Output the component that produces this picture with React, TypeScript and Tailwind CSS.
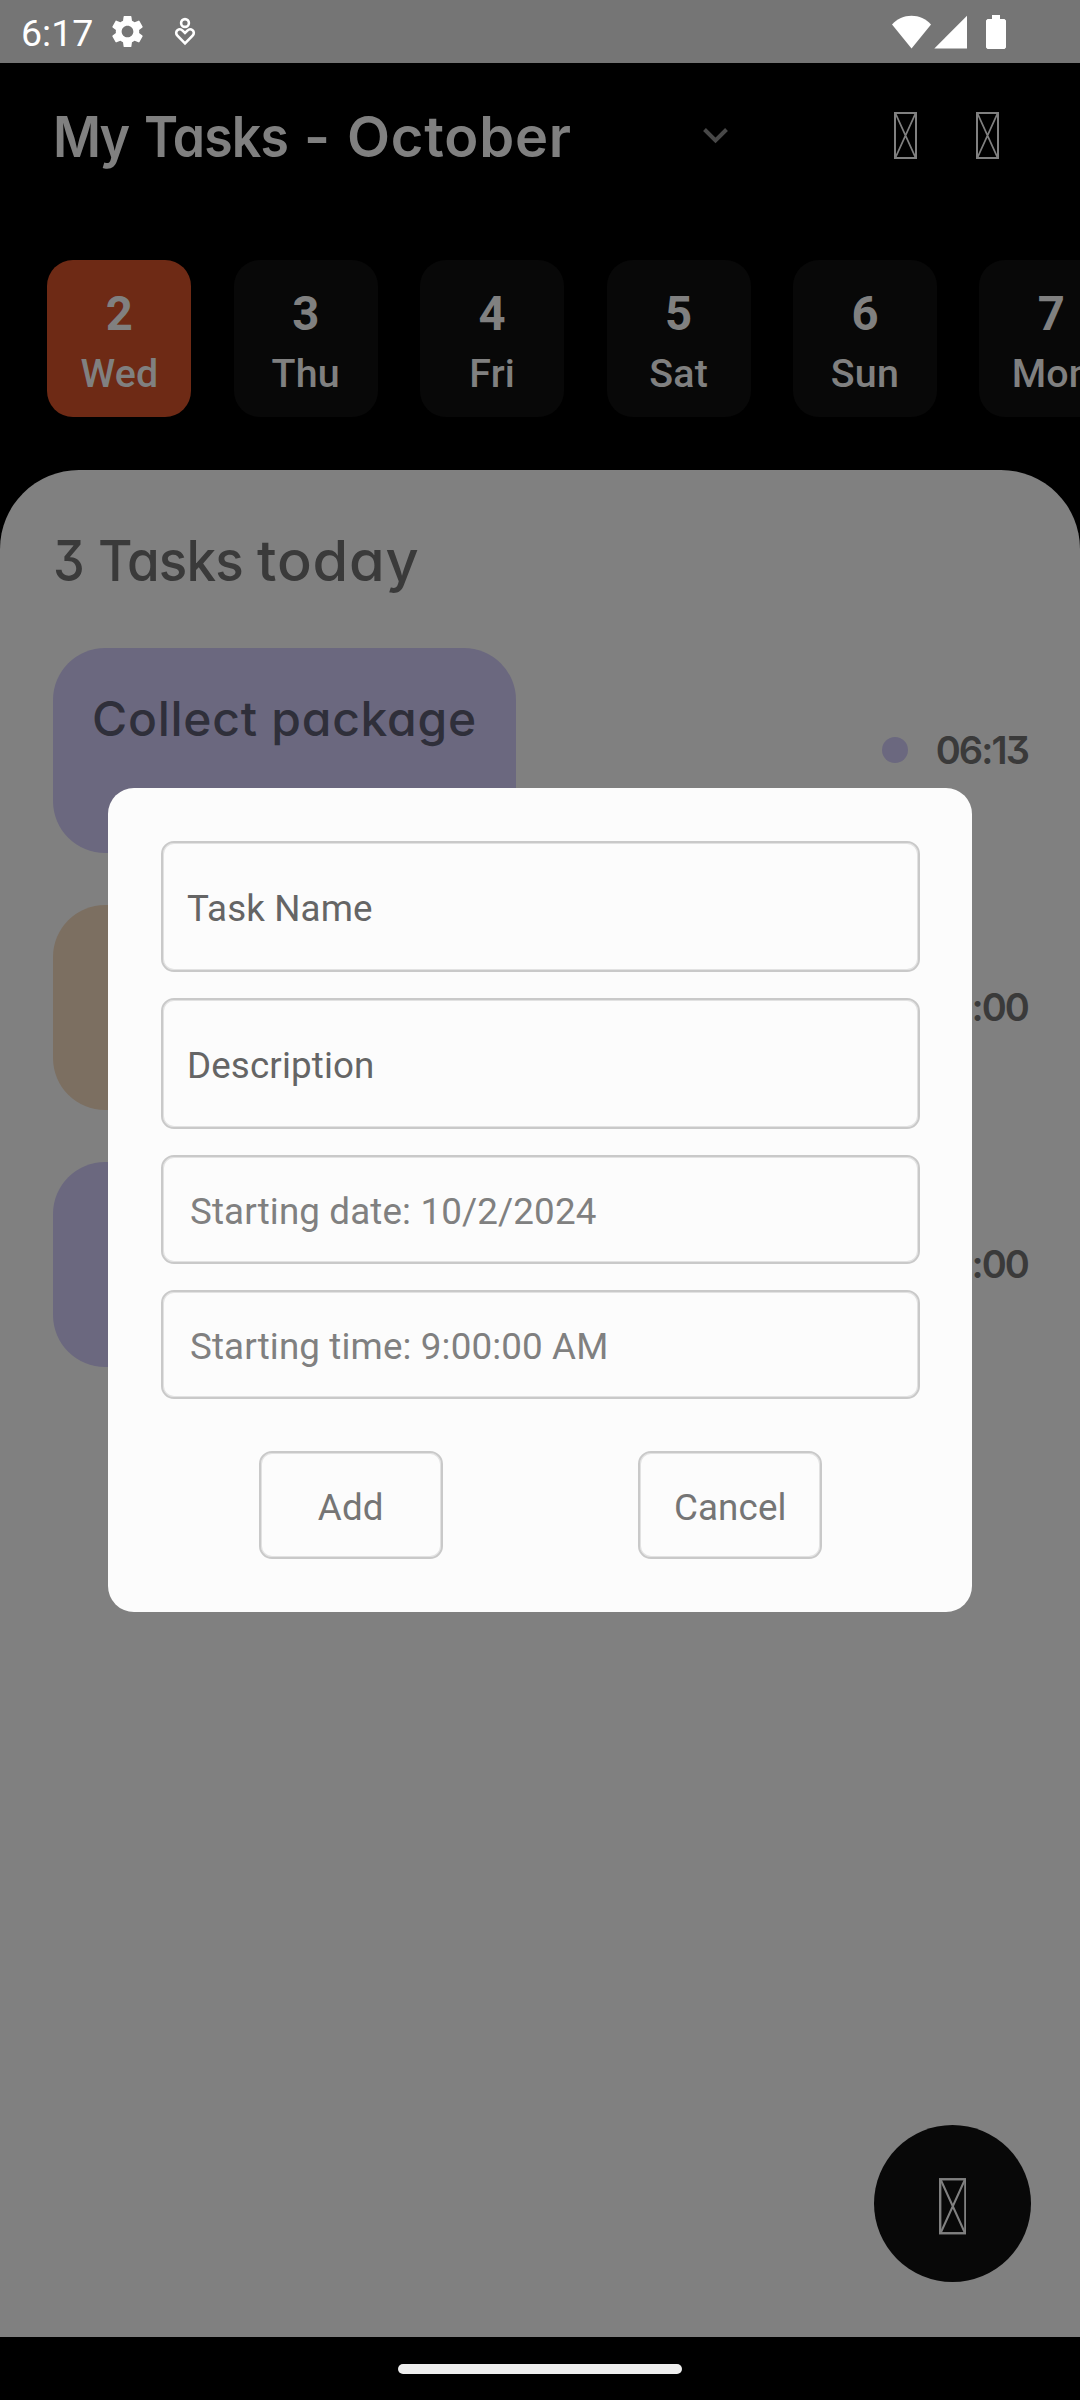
import React from "react";
import { MdSettings } from "react-icons/md";

const days = [
  { n: 2, d: "Wed", active: true },
  { n: 3, d: "Thu" },
  { n: 4, d: "Fri" },
  { n: 5, d: "Sat" },
  { n: 6, d: "Sun" },
  { n: 7, d: "Mon" },
];

const tasks = [
  { title: "Collect package", time: "06:13", tone: "bg-[#6b687f]" },
  { title: "", time: "09:00", tone: "bg-[#7c6f61]" },
  { title: "", time: "09:00", tone: "bg-[#6b687f]" },
];

function MissingGlyph({ className }: { className: string }) {
  return (
    <svg className={className} viewBox="0 0 23 47" fill="none" stroke="#808080">
      <rect x="1" y="1" width="21" height="45" strokeWidth="2" />
      <path d="M1.5 1.5L21.5 45.5M21.5 1.5L1.5 45.5" strokeWidth="1.8" />
    </svg>
  );
}

function StatusBar() {
  return (
    <div className="flex h-[63px] shrink-0 items-center bg-[#757575] pl-[21px] pr-[74px] text-white">
      <span className="w-[87px] pt-[2px] text-[37.5px] leading-[44px]">6:17</span>
      <MdSettings className="size-[39px]" />
      <svg className="ml-[27px] h-[29px] w-[22px]" viewBox="0 0 22 29" fill="none" stroke="white" strokeWidth="2.6">
        <circle cx="11" cy="6" r="3.9" />
        <path d="M11 26.3L3.4 18.6C1.7 16.8 1.9 14.4 3.4 13.2C5.2 11.8 7.3 12.3 8.6 13.6L11 16L13.4 13.6C14.7 12.3 16.8 11.8 18.6 13.2C20.1 14.4 20.3 16.8 18.6 18.6Z" />
      </svg>
      <div className="ml-auto flex items-center">
        <svg className="h-[34px] w-[39px]" viewBox="0 0 39 34" fill="white">
          <path d="M19.5 33.5L0 9.5C5 3.8 12 0.8 19.5 0.8S34 3.8 39 9.5Z" />
        </svg>
        <svg className="ml-[3px] h-[34px] w-[33px]" viewBox="0 0 33 34" fill="white">
          <path d="M33 0.8V33.5H0.3Z" />
        </svg>
        <svg className="ml-[19px] h-[34px] w-[20px]" viewBox="0 0 20 34" fill="white">
          <path d="M6 0h8v4h4.5L20 5.5V32.5L18.5 34H1.5L0 32.5V5.5L1.5 4H6Z" />
        </svg>
      </div>
    </div>
  );
}

function Header() {
  return (
    <div className="flex h-[145px] items-center pl-[53px] pr-[81px]">
      <h1 className="flex w-[650px] whitespace-pre pt-[2px] font-[Inter,sans-serif] text-[56px] font-semibold leading-[70px] text-[#808080] [font-feature-settings:'cv11','cv09']">
        <span className="w-[91px] origin-left scale-x-[0.93] tracking-[-2px]">My</span>{" "}
        <span className="w-[160px] origin-left scale-x-[0.925] tracking-[-0.86px]">
          <span className="tracking-[-6px]">T</span>asks
        </span>{" "}
        <span className="w-[43px]">-</span>{" "}
        <span className="tracking-[0.8px]">October</span>
      </h1>
      <svg className="h-[16px] w-[25px]" viewBox="0 0 25 16" fill="none" stroke="#484848" strokeWidth="4">
        <path d="M1.5 1.5L12.5 12.5L23.5 1.5" />
      </svg>
      <div className="ml-auto flex gap-[59px]">
        <MissingGlyph className="h-[47px] w-[23px]" />
        <MissingGlyph className="h-[47px] w-[23px]" />
      </div>
    </div>
  );
}

function DayStrip() {
  return (
    <div className="mt-[52px] flex gap-[42.4px] overflow-hidden pl-[47.4px]">
      {days.map(({ n, d, active }) => (
        <div
          key={n}
          className={`flex h-[157px] w-[144px] shrink-0 flex-col items-center rounded-[26px] pt-[23px] text-[#808080] ${
            active ? "bg-[#6e2a15]" : "bg-[#080808]"
          }`}
        >
          <span className="text-[47.25px] font-bold leading-[63px]">{n}</span>
          <span className="text-[39.4px] font-medium leading-[56px] tracking-[0.2px]">{d}</span>
        </div>
      ))}
    </div>
  );
}

function TaskList() {
  return (
    <div className="mt-[52px] flex flex-col gap-[52px]">
      {tasks.map(({ title, time, tone }, i) => (
        <div key={i} className="flex h-[205px] items-center justify-between">
          <div className={`h-full w-[463px] rounded-[52px] pl-[39px] pt-[41px] ${tone}`}>
            <span className="whitespace-nowrap text-[48px] font-medium leading-[60px] tracking-[0.74px] text-[#2f2f3a]">
              {title}
            </span>
          </div>
          <div className="flex items-center gap-[28px]">
            <span className={`-mt-[1px] size-[26px] rounded-full ${tone}`} />
            <span className="-mr-[1px] pb-[2px] text-right text-[38px] font-semibold leading-[46px] tracking-[-1.9px] text-[#3a3a3a]">
              {time}
            </span>
          </div>
        </div>
      ))}
    </div>
  );
}

function Field({ children, className }: { children: string; className: string }) {
  return (
    <div
      className={`flex items-center rounded-[13px] border-2 border-[#c9c9c9] text-[36.75px] leading-[44px] tracking-[0.13px] shadow-[inset_0_0_0_1px_#e2e2e2] ${className}`}
    >
      {children}
    </div>
  );
}

function TaskModal() {
  return (
    <div className="absolute left-[108px] top-[788px] flex h-[824px] w-[864px] flex-col rounded-[26px] bg-[#fcfcfc] pl-[53px] pr-[52px] pt-[53px]">
      <Field className="mb-[26px] h-[131px] pl-[24px] pt-[4px] text-[#656565]">Task Name</Field>
      <Field className="mb-[26px] h-[131px] pl-[24px] pt-[4px] text-[#656565]">Description</Field>
      <Field className="mb-[26px] h-[109px] pl-[27px] pt-[4px] text-[#808080]">Starting date: 10/2/2024</Field>
      <Field className="h-[109px] pl-[27px] pt-[4px] text-[#808080]">Starting time: 9:00:00 AM</Field>
      <div className="mt-[52px] flex justify-around">
        <Field className="h-[108px] w-[184px] justify-center pt-[5px] text-[#757575]">Add</Field>
        <Field className="h-[108px] w-[184px] justify-center pt-[5px] text-[#757575]">Cancel</Field>
      </div>
    </div>
  );
}

export default function App() {
  return (
    <div className="relative flex h-[2400px] w-[1080px] flex-col overflow-hidden bg-black font-[Roboto,sans-serif]">
      <StatusBar />
      <Header />
      <DayStrip />
      <main className="mt-[53px] flex flex-1 flex-col rounded-t-[79px] bg-[#808080] px-[53px] pt-[56px] font-[Inter,sans-serif] [font-feature-settings:'cv11','cv09']">
        <h2 className="flex whitespace-pre text-[56px] font-medium leading-[70px] text-[#3a3a3a]">
          <span className="w-[45px] origin-left scale-x-[0.9]">3</span>{" "}
          <span className="w-[159px] origin-left scale-x-[0.945] tracking-[-0.9px]">
            <span className="tracking-[-6px]">T</span>asks
          </span>{" "}
          <span className="origin-left scale-x-[1.03] tracking-[0.8px]">today</span>
        </h2>
        <TaskList />
      </main>
      <div className="flex h-[63px] shrink-0 items-center justify-center">
        <div className="h-[10px] w-[284px] rounded-full bg-[#eeeeee]" />
      </div>
      <button className="absolute left-[874px] top-[2125px] flex size-[157px] items-center justify-center rounded-full bg-[#080808]">
        <MissingGlyph className="mt-[6px] h-[56.5px] w-[27.6px]" />
      </button>
      <TaskModal />
    </div>
  );
}
